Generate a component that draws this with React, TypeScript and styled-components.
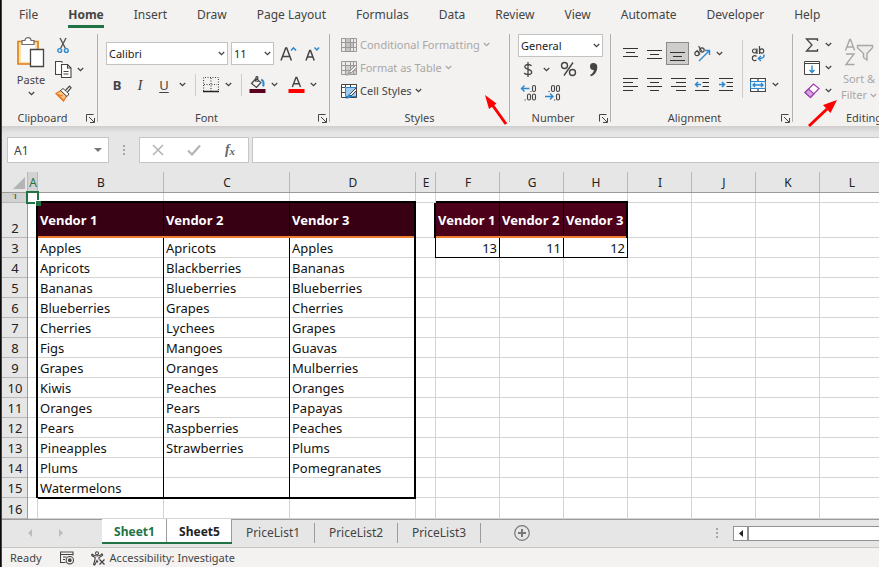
import React from "react";
import styled, { createGlobalStyle, css } from "styled-components";

const UI_FONT = `"Noto Sans", "Open Sans", sans-serif`;
const GREEN = "#217346";
const INK = "#444444";
const BLUE = "#2b88d0";
const MUTED = "#a9a7a5";

const GlobalStyle = createGlobalStyle`
  *, *::before, *::after { box-sizing: border-box; }
  body { margin: 0; background: #f3f2f1; font-family: ${UI_FONT}; color: ${INK}; }
  button, input, select { font: inherit; color: inherit; margin: 0; padding: 0; border: 0; background: none; border-radius: 0; }
  svg { display: block; flex: none; }
`;

const Window = styled.div`
  display: flex;
  flex-direction: column;
  min-height: 100vh;
  overflow: hidden;
  border-left: 1px solid #0b0b0b;
  box-shadow: inset 1px 0 0 #1d5a39;
  padding-left: 1px;
`;

/* ---------- Ribbon tabs ---------- */

const TabBar = styled.nav`
  display: flex;
  gap: 30px;
  height: 33px;
  padding-left: 17px;
  font-size: 12px;
  line-height: 16px;
  white-space: nowrap;
`;

const RibbonTab = styled.button<{ $active?: boolean }>`
  flex: none;
  height: 28px;
  padding-top: 4px;
  border-bottom: 3px solid ${(p) => (p.$active ? GREEN : "transparent")};
  font-weight: ${(p) => (p.$active ? 700 : 400)};
`;

/* ---------- Ribbon ---------- */

const Ribbon = styled.section`
  position: relative;
  display: flex;
  height: 93px;
  font-size: 11px;
  line-height: 16px;
  white-space: nowrap;
`;

const Group = styled.div<{ $width: number }>`
  flex: none;
  width: ${(p) => p.$width}px;
  display: grid;
  grid-template-rows: 77px 16px;
`;

const GroupDivider = styled.div`
  flex: none;
  width: 1px;
  height: 88px;
  margin-top: 1px;
  background: #b1b0af;
`;

const GroupBody = styled.div<{ $left?: number; $column?: boolean }>`
  display: flex;
  flex-direction: ${(p) => (p.$column ? "column" : "row")};
  align-items: flex-start;
  padding-left: ${(p) => p.$left ?? 0}px;
`;

const GroupFooter = styled.div<{ $launcher: boolean }>`
  display: grid;
  grid-template-columns: ${(p) => (p.$launcher ? "1fr 14px" : "1fr")};
  align-items: center;
  text-align: center;
  button { justify-self: end; padding-right: 2px; }
`;

const Row = styled.div<{ $top?: number; $gap?: number }>`
  display: flex;
  align-items: center;
  height: 23px;
  margin-top: ${(p) => p.$top ?? 0}px;
  gap: ${(p) => p.$gap ?? 0}px;
`;

const Tool = styled.button<{ $width?: number; $active?: boolean }>`
  display: flex;
  align-items: center;
  justify-content: center;
  flex: none;
  width: ${(p) => p.$width ?? 24}px;
  height: 23px;
  font-size: 13px;
  ${(p) => p.$active && css`&& { background: #cfcdcc; border: 1px solid #8b8a89; }`}
`;

const BigTool = styled.button<{ $width: number; $muted?: boolean }>`
  display: flex;
  flex-direction: column;
  align-items: center;
  gap: 3px;
  width: ${(p) => p.$width}px;
  && { padding-top: 4px; }
  color: ${(p) => (p.$muted ? MUTED : INK)};
`;

const StackedLabel = styled.span`
  display: grid;
  justify-items: center;
`;

const LabelWithChevron = styled.span`
  display: flex;
  align-items: center;
  gap: 3px;
`;

const ToolColumn = styled.div<{ $row: number; $left?: number }>`
  display: grid;
  grid-auto-rows: ${(p) => p.$row}px;
  align-items: center;
  margin-left: ${(p) => p.$left ?? 0}px;
`;

const StyleButton = styled.button`
  display: flex;
  align-items: center;
  gap: 3px;
  height: 23px;
  &:disabled { color: ${MUTED}; }
`;

const Separator = styled.div<{ $left: number; $right: number; $tall?: boolean }>`
  flex: none;
  width: 1px;
  height: ${(p) => (p.$tall ? 58 : 22)}px;
  margin: ${(p) => (p.$tall ? 7 : 0)}px ${(p) => p.$right}px 0 ${(p) => p.$left}px;
  background: #cfcdcc;
`;

const FontColorTools = styled.div`
  display: flex;
  margin-left: 5px;
`;

const AlignGrid = styled.div`
  display: grid;
  grid-template-columns: repeat(5, 24px);
  grid-auto-rows: 23px;
  row-gap: 8px;
  padding-top: 9px;
`;

const WrapColumn = styled.div`
  display: grid;
  grid-template-columns: 22px 12px;
  grid-auto-rows: 23px;
  row-gap: 8px;
  padding-top: 9px;
`;

const SelectBox = styled.label<{ $width: number }>`
  position: relative;
  flex: none;
  width: ${(p) => p.$width}px;
  height: 23px;
  color: #1b1b1b;
  select {
    appearance: none;
    width: 100%;
    height: 100%;
    padding: 0 14px 0 2px;
    background: #fff;
    border: 1px solid #c3c2c1;
  }
  svg { position: absolute; right: 3px; top: 9px; pointer-events: none; }
`;

const Pointers = styled.svg`
  position: absolute;
  left: 0;
  top: 0;
  pointer-events: none;
`;

/* ---------- Formula bar ---------- */

const FormulaRow = styled.div`
  display: flex;
  height: 46px;
  padding: 11px 0 9px 5px;
  background: linear-gradient(#cfcecd, #e6e6e6 7px);
  font-size: 12px;
`;

const NameBox = styled.div`
  display: flex;
  flex: none;
  width: 102px;
  background: #fff;
  border: 1px solid #c6c6c6;
  input { flex: 1; min-width: 0; padding-left: 6px; outline: 0; }
  button { width: 20px; display: grid; place-items: center; }
`;

const Grip = styled.div<{ $width: number }>`
  flex: none;
  width: ${(p) => p.$width}px;
  display: grid;
  place-items: center;
`;

const EntryButtons = styled.div`
  display: grid;
  grid-template-columns: repeat(3, 1fr);
  flex: none;
  width: 110px;
  background: #fff;
  border: 1px solid #c6c6c6;
  button { display: grid; place-items: center; }
`;

const FunctionMark = styled.span`
  font-family: "Liberation Serif", serif;
  font-style: italic;
  font-weight: 700;
  font-size: 14px;
  line-height: 16px;
  color: #666;
  sub { font-size: 11px; line-height: 1; vertical-align: -1px; }
`;

const FormulaInput = styled.input`
  && {
    flex: 1;
    min-width: 0;
    margin-left: 3px;
    padding: 0 6px;
    background: #fff;
    border: 1px solid #c6c6c6;
    border-right: 0;
  }
`;

/* ---------- Grid ---------- */

const SheetArea = styled.main`
  overflow: hidden;
  background: #fff;
`;

const Sheet = styled.table`
  table-layout: fixed;
  width: 100%;
  min-width: 882px;
  border-collapse: separate;
  border-spacing: 0;
  color: #111;
  font-size: 13px;
  line-height: 19px;
  th, td { padding: 0; overflow: hidden; white-space: nowrap; }
`;

const Col = styled.col<{ $width?: number }>`
  width: ${(p) => (p.$width ? `${p.$width}px` : "auto")};
`;

const SheetRow = styled.tr<{ $height: number }>`
  height: ${(p) => p.$height}px;
`;

const ColumnHead = styled.th<{ $active?: boolean }>`
  font-size: 12px;
  font-weight: 400;
  background: ${(p) => (p.$active ? "#d2d2d2" : "#e6e6e6")};
  color: ${(p) => (p.$active ? GREEN : "#222")};
  box-shadow: inset 0 -1px 0 #9b9b9b, inset -1px 0 0 #b9b9b9;
`;

const Corner = styled.td`
  background: #e6e6e6;
  box-shadow: inset 0 -1px 0 #9b9b9b, inset -1px 0 0 #b9b9b9;
  svg { margin: 0 3px 0 auto; }
`;

const RowHead = styled.th<{ $active?: boolean }>`
  font-weight: 400;
  vertical-align: bottom;
  background: ${(p) => (p.$active ? "#d2d2d2" : "#e6e6e6")};
  color: ${(p) => (p.$active ? GREEN : "#222")};
  box-shadow: inset -1px 0 0 #9b9b9b, inset 0 -1px 0 #b9b9b9;
`;

const ClippedNumber = styled.span`
  display: block;
  height: 5px;
  margin-bottom: 4px;
  overflow: hidden;
  line-height: 5px;
`;

const Cell = styled.td<{ $edges: string; $fill?: string; $number?: boolean }>`
  background: ${(p) => p.$fill ?? "#fff"};
  box-shadow: ${(p) => p.$edges};
  text-align: ${(p) => (p.$number ? "right" : "left")};
  && { padding: 0 ${(p) => (p.$number ? 3 : 2)}px 0 2px; }
  ${(p) => p.$fill && css`color: #fff; font-weight: 700;`}
`;

const SelectedCell = styled.td`
  position: relative;
  && { overflow: visible; }
  &::before {
    content: "";
    position: absolute;
    z-index: 1;
    inset: -2px -1px -1px -2px;
    border: 2px solid ${GREEN};
  }
  &::after {
    content: "";
    position: absolute;
    z-index: 2;
    right: -3px;
    bottom: -3px;
    width: 6px;
    height: 6px;
    background: ${GREEN};
    border: 1px solid #fff;
    border-width: 1px 0 0 1px;
  }
`;

/* ---------- Sheet tabs and status ---------- */

const SheetBar = styled.div`
  display: flex;
  height: 29px;
  background: #e6e6e6;
  border-bottom: 1px solid #c6c6c6;
  box-shadow: inset 0 1px 0 #9b9b9b;
  font-size: 12px;
  line-height: 16px;
`;

const SheetNav = styled.div`
  display: flex;
  flex: none;
  width: 100px;
  padding: 0 28px 0 15px;
  button { flex: 1; display: grid; place-items: center; }
`;

const SheetTab = styled.button<{ $selected?: boolean; $current?: boolean }>`
  flex: none;
  align-self: flex-start;
  width: ${(p) => (p.$selected ? 65 : 83)}px;
  white-space: nowrap;
  ${(p) =>
    p.$selected
      ? css`
          && {
            height: 25px;
            padding-top: 3px;
            background: #fff;
            border-bottom: 2px solid ${GREEN};
            box-shadow: inset -1px 0 0 #9b9b9b;
            font-weight: 700;
            color: ${p.$current ? GREEN : "#222"};
          }
        `
      : css`
          && {
            margin-top: 4px;
            height: 20px;
            border-right: 1px solid #9b9b9b;
          }
        `}
`;

const AddSheet = styled.button`
  flex: none;
  display: grid;
  place-items: center;
  width: 82px;
`;

const Spacer = styled.div`
  flex: 1;
`;

const Scroller = styled.div`
  display: flex;
  flex: none;
  width: 146px;
  height: 15px;
  margin-top: 7px;
  background: #fff;
  border: 1px solid #919191;
  border-right: 0;
  button { width: 15px; display: grid; place-items: center; border-right: 2px solid #919191; }
`;

const StatusBar = styled.footer`
  display: flex;
  align-items: center;
  height: 20px;
  padding: 0 8px;
  font-size: 11px;
  line-height: 16px;
  white-space: nowrap;
`;

const StatusItem = styled.button<{ $left: number }>`
  display: flex;
  align-items: center;
  gap: 4px;
  && { margin-left: ${(p) => p.$left}px; }
`;

/* ---------- Icons ---------- */

const Chevron = ({ color = INK }: { color?: string }) => (
  <svg width="7" height="5" viewBox="0 0 7 5" fill="none" stroke={color} strokeWidth="1.3"><path d="M.8 1 3.5 3.6 6.2 1" /></svg>
);

const Launcher = () => (
  <svg width="9" height="9" viewBox="0 0 9 9" fill="none" stroke={INK}><path d="M.5 7.5v-7h7M3 3l5 5M8.5 4v4.5H4" /></svg>
);

const PasteIcon = () => (
  <svg width="28" height="32" viewBox="0 0 28 32" fill="none">
    <path d="M1 4.5h20V27H1z" fill="#fbe3b0" stroke="#e07b12" strokeWidth="1.6" />
    <path d="M4 7h14v18H4z" fill="#fbfbfb" />
    <path d="M5 3.5h3C8 1.5 9.3.7 11 .7s3 .8 3 2.8h3v4H5z" fill="#fff" stroke="#6d6d6d" strokeWidth="1.2" />
    <path d="M13.5 12.5h13v17h-13z" fill="#fff" stroke="#444" strokeWidth="1.3" />
  </svg>
);

const CutIcon = () => (
  <svg width="16" height="17" viewBox="0 0 16 17" fill="none">
    <path d="M5 1l5.5 10.5M11 1 5.500 11.500" stroke="#555" strokeWidth="1.4" />
    <circle cx="4.7" cy="13.5" r="1.9" stroke={BLUE} strokeWidth="1.4" />
    <circle cx="11.3" cy="13.5" r="1.9" stroke={BLUE} strokeWidth="1.4" />
  </svg>
);

const CopyIcon = () => (
  <svg width="17" height="17" viewBox="0 0 17 17" fill="#fff" stroke="#444" strokeWidth="1.1">
    <path d="M6.500 13.500h-6V.5h6l1 1" />
    <path d="M6.500 3.500h6l3.500 3.500v9.500H6.500z" /><path d="M12.500 3.500V7H16M8.500 10.500h5M8.500 13h5" fill="none" />
  </svg>
);

const BrushIcon = () => (
  <svg width="17" height="17" viewBox="0 0 17 17">
    <path d="M1 8.500 6 5.500l5.500 5.500-3 5L4.500 12z" fill="#f9c78a" stroke="#e8741a" strokeWidth="1.2" />
    <path d="M3 9.500 8.500 15M3 9.500l5 1.500" stroke="#e8741a" fill="none" />
    <path d="M5.500 5.500 8 3.500l6 5.500-2 2.500z" fill="#fff" stroke="#444" />
    <path d="M10.500 5.500 14.500 1.200 16 2.800 12.500 7" fill="#fff" stroke="#444" strokeWidth="1.2" />
  </svg>
);

const FontSizeIcon = ({ grow }: { grow?: boolean }) => (
  <svg width="18" height="17" viewBox="0 0 18 17" fill="none">
    {grow ? (
      <>
        <path d="M1 15.500 5.700 3h1L11.400 15.500M2.800 11.500h6.800" stroke={INK} strokeWidth="1.5" />
        <path d="M11 5.500 13.500 2.800 16 5.500" stroke={BLUE} strokeWidth="1.5" />
      </>
    ) : (
      <>
        <path d="M2 15.500 5.700 5.500h.8l3.700 10M3.400 12h5.400" stroke={INK} strokeWidth="1.5" />
        <path d="M10.500 2.500 12.800 5l2.300-2.500" stroke={BLUE} strokeWidth="1.5" />
      </>
    )}
  </svg>
);

const BordersIcon = () => (
  <svg width="16" height="16" viewBox="0 0 16 16" stroke={INK} fill="none">
    <path d="M.5 14V.5h15V14M8 1v13M1 7.500h14" strokeDasharray="1 1.5" strokeWidth="1.2" />
    <path d="M0 14.500h16" stroke="#222" strokeWidth="1.5" />
  </svg>
);

const FillIcon = () => (
  <svg width="17" height="17" viewBox="0 0 17 17" fill="none">
    <path d="M7 2.500 2.500 7.500 7.500 11.500 12 6.500zM7 6V1.300c0-.8 1.800-.8 1.800 0V6" stroke={INK} strokeWidth="1.2" />
    <path d="M12 4c2.500 0 3 2.500 2.200 6.500" stroke={BLUE} strokeWidth="2" />
    <path d="M.5 13h16v4H.5z" fill="#5a0020" />
  </svg>
);

const FontColorIcon = () => (
  <svg width="17" height="17" viewBox="0 0 17 17" fill="none">
    <path d="M4.300 11 8 1.500h.8L12.500 11M5.600 7.800h5.600" stroke={INK} strokeWidth="1.4" />
    <path d="M.5 13h16v4H.5z" fill="#ff0000" />
  </svg>
);

const StyleGridIcon = ({ kind }: { kind: "conditional" | "table" | "cell" }) => {
  const on = kind === "cell";
  const line = on ? INK : "#9a9896";
  return (
    <svg width="16" height="16" viewBox="0 0 16 16" fill="none">
      <path d="M.5 1.500h15v13H.5z" fill={on ? "#fff" : "#ecebea"} stroke={line} />
      {kind === "conditional" && <path d="M5 1.500h4v4H5zM5 6h7v4H5zM5 10.500h4v3.500H5z" fill="#c4c2c0" />}
      {kind === "table" && <path d="M5 5.500h10v8.500H5z" fill="#d0cecc" />}
      {on && <path d="M4.500 4.500h11v9h-11z" fill="#9fcbf0" stroke={BLUE} />}
      <path d={on ? "M4.500 1v3M1 4.500h3M1 9.500h3M9.500 1v3M15.500 1.500v13" : "M4.500 1v13.500M9.500 1v13.500M1 5.500h14.500M1 10.500h14.500M12.500 1v13"} stroke={line} />
      {kind !== "conditional" && (
        <>
          <path d="M15.500 4.500 8.500 11.500l1.500 1.500 5.500-5.500z" fill="#f3f2f1" stroke={line} />
          <path d="M8.500 11c-2 .5-1.500 3-4 4.300 2.500.7 5.500 0 5.700-2.500z" fill={on ? BLUE : "#aaa8a6"} />
        </>
      )}
    </svg>
  );
};

const DollarIcon = () => (
  <svg width="12" height="17" viewBox="0 0 12 17" fill="none" stroke={INK} strokeWidth="1.3">
    <path d="M9.500 4.800C8.500 3.700 7 3.500 6 3.500c-2 0-3.200 1-3.200 2.300C2.800 9 9.700 7.600 9.700 11c0 1.500-1.400 2.500-3.700 2.500-1.500 0-3-.4-3.900-1.500M6 1v15" />
  </svg>
);

const PercentIcon = () => (
  <svg width="17" height="17" viewBox="0 0 17 17" fill="none" stroke={INK} strokeWidth="1.4">
    <circle cx="4.500" cy="4.500" r="3" /><circle cx="12.500" cy="11.500" r="3" /><path d="M13 1.500 4 14.500" />
  </svg>
);

const CommaIcon = () => (
  <svg width="11" height="16" viewBox="0 0 9 14"><path d="M4.300.8a3.300 3.300 0 0 1 3.500 3.500c0 4-2.300 7-5.500 8.200L1.500 11.300C3.500 10.200 4.700 8.800 4.800 7A3.100 3.100 0 1 1 4.300.8z" fill={INK} /></svg>
);

const DecimalIcon = ({ increase }: { increase?: boolean }) => (
  <svg width="18" height="18" viewBox="0 0 18 18" fill="none" stroke={INK} strokeWidth="1.1">
    {increase ? (
      <>
        <path d="M9.500 4.500H1.500M4.500 1.500l-3 3 3 3" stroke={BLUE} strokeWidth="1.4" />
        <rect x="12.500" y="1.500" width="3" height="6" rx="1.5" /><path d="M10.500 7.500h1M4.500 16h1.200" />
        <rect x="7.500" y="10" width="3" height="6" rx="1.5" /><rect x="12.500" y="10" width="3" height="6" rx="1.5" />
      </>
    ) : (
      <>
        <rect x="7.500" y="1.500" width="3" height="6" rx="1.5" /><rect x="12.500" y="1.500" width="3" height="6" rx="1.5" />
        <path d="M4.500 7.500h1.200M10 16h1.200" /><rect x="12.500" y="10" width="3" height="6" rx="1.5" />
        <path d="M1 12.500h8M6 9.500l3 3-3 3" stroke={BLUE} strokeWidth="1.4" />
      </>
    )}
  </svg>
);

const LinesIcon = ({ d }: { d: string }) => (
  <svg width="15" height="15" viewBox="0 0 15 15" fill="none" stroke="#333" strokeWidth="1"><path d={d} /></svg>
);

const IndentIcon = ({ out }: { out?: boolean }) => (
  <svg width="16" height="15" viewBox="0 0 16 15" fill="none">
    <path d="M1 1.500h14M8.500 5.500h6.500M8.500 9.500h6.500M1 13.500h14" stroke="#333" />
    <path d={out ? "M7 7.500H1.500M4 5 1.500 7.500 4 10" : "M1 7.500h5.500M4 5l2.500 2.500L4 10"} stroke={BLUE} strokeWidth="1.5" />
  </svg>
);

const OrientationIcon = () => (
  <svg width="18" height="18" viewBox="0 0 18 18" fill="none" stroke={INK} strokeWidth="1.2">
    <circle cx="4" cy="8.500" r="2.200" /><path d="M3.800 5 7 9.500" /><circle cx="9" cy="5" r="2.200" /><path d="M5.500 1 9 6.500" />
    <path d="M6 16 16 6M12 5.500h4.500V10" stroke={BLUE} strokeWidth="1.4" />
  </svg>
);

const WrapIcon = () => (
  <svg width="16" height="18" viewBox="0 0 16 18" fill="none" stroke={INK} strokeWidth="1.2">
    <circle cx="4.500" cy="6" r="2" /><path d="M7 3.500V9M9.500 1v8" /><circle cx="11.700" cy="6" r="2.100" />
    <path d="M6.500 11.500c-1.500-1.500-4.200-.7-4.200 1.700s2.700 3.200 4.200 1.700" />
    <path d="M13.800 9.500c.8 2.500-.8 4-5.300 4M11 11l-2.700 2.500L11 16" stroke={BLUE} strokeWidth="1.4" />
  </svg>
);

const MergeIcon = () => (
  <svg width="16" height="16" viewBox="0 0 16 16" fill="none">
    <path d="M.5 1.500h15v13H.5zM8 1v3.500M8 11.500V15" fill="#fff" stroke={INK} strokeWidth="1.2" />
    <path d="M.5 4.500h15v7H.5z" fill="#e8f3fc" stroke={BLUE} strokeWidth="1.2" />
    <path d="M3 8h10M5 6 3 8l2 2M11 6l2 2-2 2" stroke={BLUE} strokeWidth="1.3" />
  </svg>
);

const SumIcon = () => (
  <svg width="14" height="14" viewBox="0 0 14 14" fill="none" stroke={INK} strokeWidth="1.3"><path d="M12.500 3V1H1.500L7 7l-5.500 6h11v-2" /></svg>
);

const FillDownIcon = () => (
  <svg width="16" height="14" viewBox="0 0 16 14" fill="none">
    <path d="M.5.5h15v13H.5zM1 2.500h14" fill="#fff" stroke={INK} /><path d="M8 4.500v7M5.500 9 8 11.500 10.500 9" stroke={BLUE} strokeWidth="1.4" />
  </svg>
);

const EraserIcon = () => (
  <svg width="16" height="16" viewBox="0 0 16 16">
    <path d="M1 9.500 9.500 1 15 5.500 6.500 14.500z" fill="#fff" stroke="#9b3fb0" strokeWidth="1.2" />
    <path d="M1 9.500 4.500 6 10 10.700l-3.500 3.800z" fill="#d9a3e3" stroke="#9b3fb0" strokeWidth="1.2" />
  </svg>
);

const SortFilterIcon = () => (
  <svg width="30" height="31" viewBox="0 0 30 31" fill="none" stroke={MUTED} strokeWidth="1.4">
    <path d="M1.500 13.500 5.700 2.500h.8l4.200 11M3 10h6.300M2 17h8L2 27.500h8.500" />
    <path d="M13.500 8.500h15v2.200L23 16.500v6.500l-3.500-2.500v-4L13.500 10.700z" fill="#eeedec" />
  </svg>
);

const Dots = () => (
  <svg width="2" height="11" viewBox="0 0 2 11" fill="#a6a6a6"><path d="M0 0h2v2H0zM0 4h2v2H0zM0 8h2v2H0z" /></svg>
);

const Triangle = ({ d, color, width = 8, height = 8 }: { d: string; color: string; width?: number; height?: number }) => (
  <svg width={width} height={height} viewBox={`0 0 ${width} ${height}`} fill={color}><path d={d} /></svg>
);

const MacroIcon = () => (
  <svg width="15" height="14" viewBox="0 0 15 14" fill="none" stroke={INK} strokeWidth="1.1">
    <path d="M5.500 11.500h-5V1h12.500v3.500M.5 3.500H13M3 6h3.500M3 8.500h2" /><circle cx="9.800" cy="9.200" r="3.700" /><circle cx="9.800" cy="9.200" r="1.300" fill={INK} />
  </svg>
);

const AccessibilityIcon = () => (
  <svg width="15" height="15" viewBox="0 0 15 15" fill="none" stroke={INK} strokeWidth="1.1">
    <circle cx="6" cy="2.200" r="1.500" /><path d="M1 3c1.500 1.500 3 2 5 2s3.500-.5 5-2l.7 1.200C10.500 5.500 9 6 8 6.500v2M1 3 .5 4.200C1.500 5.500 3 6 4.200 6.500c0 3-.7 4.500-1.700 7l1.200.5L6 9.500l1 2" />
    <path d="m8.500 8.500 5 5M13.500 8.500l-5 5" strokeWidth="1.3" />
  </svg>
);

/* ---------- Data ---------- */

const ribbonTabs = ["File", "Home", "Insert", "Draw", "Page Layout", "Formulas", "Data", "Review", "View", "Automate", "Developer", "Help"];

const columns = "ABCDEFGHIJKL".split("");
const columnWidths: (number | undefined)[] = [10, 126, 126, 126, 20, 64, 64, 64, 64, 64, 64, undefined];

const vendors: Record<string, string[]> = {
  B: ["Apples", "Apricots", "Bananas", "Blueberries", "Cherries", "Figs", "Grapes", "Kiwis", "Oranges", "Pears", "Pineapples", "Plums", "Watermelons"],
  C: ["Apricots", "Blackberries", "Blueberries", "Grapes", "Lychees", "Mangoes", "Oranges", "Peaches", "Pears", "Raspberries", "Strawberries"],
  D: ["Apples", "Bananas", "Blueberries", "Cherries", "Grapes", "Guavas", "Mulberries", "Oranges", "Papayas", "Peaches", "Plums", "Pomegranates"],
};
const counts: Record<string, number> = { F: 13, G: 11, H: 12 };
const headings: Record<string, string> = { B: "Vendor 1", C: "Vendor 2", D: "Vendor 3", F: "Vendor 1", G: "Vendor 2", H: "Vendor 3" };

const inList = (c: string) => "BCD".includes(c);
const inCounts = (c: string) => "FGH".includes(c);

function cellText(col: string, row: number) {
  if (row === 2) return headings[col];
  if (row === 3 && counts[col]) return counts[col];
  return vendors[col]?.[row - 3];
}

/* Cell rules are painted as inset shadows; earlier entries lie on top. */
function cellEdges(col: string, row: number) {
  const right = (w: number, c: string) => `inset -${w}px 0 0 ${c}`;
  const bottom = (w: number, c: string) => `inset 0 -${w}px 0 ${c}`;
  const edges: string[] = [];
  const listRow = row >= 2 && row <= 15;
  if (row === 1 && (inList(col) || inCounts(col))) edges.push(bottom(2, "#000"));
  if (listRow && (col === "A" || col === "D")) edges.push(right(2, "#000"));
  if (row === 2 && (col === "E" || col === "H")) edges.push(right(2, "#000"));
  if (row === 2 && (inList(col) || inCounts(col))) edges.push(bottom(2, "#ed7d31"));
  if (listRow && (col === "B" || col === "C")) edges.push(right(1, "#000"));
  if (row === 2 && (col === "F" || col === "G")) edges.push(right(1, "#000"));
  if (row === 3 && (col === "E" || inCounts(col))) edges.push(right(1, "#000"));
  if (row === 3 && inCounts(col)) edges.push(bottom(1, "#000"));
  if (row === 15 && inList(col)) edges.push(bottom(1, "#000"));
  if (row === 16 && inList(col)) edges.push("inset 0 1px 0 #000");
  edges.push(right(1, "#d4d4d4"), bottom(1, "#d4d4d4"));
  return edges.join(", ");
}

const rowHeight = (row: number) => (row === 1 ? 10 : row === 2 ? 35 : row === 16 ? 21 : 20);

/* ---------- Parts ---------- */

const Footer = ({ label, launcher = true }: { label: string; launcher?: boolean }) => (
  <GroupFooter $launcher={launcher}>
    <span>{label}</span>
    {launcher && <button aria-label={`${label} settings`}><Launcher /></button>}
  </GroupFooter>
);

const Picker = ({ label, value, width }: { label: string; value: string; width: number }) => (
  <SelectBox $width={width}>
    <select aria-label={label} defaultValue={value}><option>{value}</option></select>
    <Chevron />
  </SelectBox>
);

const More = ({ label, width = 14 }: { label: string; width?: number }) => (
  <Tool $width={width} aria-label={label}><Chevron /></Tool>
);

const Letter = styled.span<{ $kind: "bold" | "italic" | "underline" }>`
  font-weight: ${(p) => (p.$kind === "bold" ? 700 : 400)};
  font-style: ${(p) => (p.$kind === "italic" ? "italic" : "normal")};
  font-family: ${(p) => (p.$kind === "italic" ? `"Liberation Serif", serif` : UI_FONT)};
  font-size: ${(p) => (p.$kind === "italic" ? 15 : 13)}px;
  text-decoration: ${(p) => (p.$kind === "underline" ? "underline" : "none")};
  text-underline-offset: 2px;
`;

function RibbonBody() {
  return (
    <Ribbon aria-label="Home ribbon">
      <Group $width={95}>
        <GroupBody $left={13}>
          <BigTool $width={32}>
            <PasteIcon /><span>Paste</span><Chevron />
          </BigTool>
          <ToolColumn $row={24} $left={4}>
            <Tool aria-label="Cut"><CutIcon /></Tool>
            <Row><Tool aria-label="Copy"><CopyIcon /></Tool><More label="Copy options" width={10} /></Row>
            <Tool aria-label="Format Painter"><BrushIcon /></Tool>
          </ToolColumn>
        </GroupBody>
        <Footer label="Clipboard" />
      </Group>
      <GroupDivider />
      <Group $width={231}>
        <GroupBody $left={8} $column>
          <Row $top={9} $gap={3}>
            <Picker label="Font" value="Calibri" width={122} />
            <Picker label="Font size" value="11" width={43} />
            <Row>
              <Tool aria-label="Increase font size"><FontSizeIcon grow /></Tool>
              <Tool aria-label="Decrease font size"><FontSizeIcon /></Tool>
            </Row>
          </Row>
          <Row $top={8}>
            <Tool $width={22} aria-label="Bold"><Letter $kind="bold">B</Letter></Tool>
            <Tool aria-label="Italic"><Letter $kind="italic">I</Letter></Tool>
            <Tool aria-label="Underline"><Letter $kind="underline">U</Letter></Tool>
            <More label="Underline options" width={12} />
            <Separator $left={7} $right={5} />
            <Tool $width={20} aria-label="Borders"><BordersIcon /></Tool>
            <More label="Border options" />
            <Separator $left={6} $right={5} />
            <Tool $width={20} aria-label="Fill color"><FillIcon /></Tool>
            <More label="Fill color options" />
            <FontColorTools>
              <Tool $width={20} aria-label="Font color"><FontColorIcon /></Tool>
              <More label="Font color options" />
            </FontColorTools>
          </Row>
        </GroupBody>
        <Footer label="Font" />
      </Group>
      <GroupDivider />
      <Group $width={179}>
        <GroupBody $left={11} $column>
          <StyleButton disabled><StyleGridIcon kind="conditional" />Conditional Formatting<Chevron color={MUTED} /></StyleButton>
          <StyleButton disabled><StyleGridIcon kind="table" />Format as Table<Chevron color={MUTED} /></StyleButton>
          <StyleButton><StyleGridIcon kind="cell" />Cell Styles<Chevron /></StyleButton>
        </GroupBody>
        <Footer label="Styles" launcher={false} />
      </Group>
      <GroupDivider />
      <Group $width={100}>
        <GroupBody $left={8} $column>
          <Row $top={1}><Picker label="Number format" value="General" width={85} /></Row>
          <Row $top={1}>
            <Tool $width={20} aria-label="Accounting format"><DollarIcon /></Tool>
            <More label="Currency options" width={16} />
            <Tool $width={28} aria-label="Percent style"><PercentIcon /></Tool>
            <Tool $width={22} aria-label="Comma style"><CommaIcon /></Tool>
          </Row>
          <Row $gap={2}>
            <Tool $width={22} aria-label="Increase decimal"><DecimalIcon increase /></Tool>
            <Tool $width={22} aria-label="Decrease decimal"><DecimalIcon /></Tool>
          </Row>
        </GroupBody>
        <Footer label="Number" />
      </Group>
      <GroupDivider />
      <Group $width={181}>
        <GroupBody $left={7}>
          <AlignGrid>
            <Tool aria-label="Top align"><LinesIcon d="M0 2.500h15M3 6.500h9M0 10.500h15" /></Tool>
            <Tool aria-label="Middle align"><LinesIcon d="M0 4.500h15M3 8.500h9M0 12.500h15" /></Tool>
            <Tool $width={23} $active aria-pressed aria-label="Bottom align"><LinesIcon d="M0 6.500h15M3 10.500h9M0 14.500h15" /></Tool>
            <Tool aria-label="Orientation"><OrientationIcon /></Tool>
            <More label="Orientation options" width={10} />
            <Tool aria-label="Align left"><LinesIcon d="M0 1.500h15M0 5.500h10M0 9.500h15M0 13.500h10" /></Tool>
            <Tool aria-label="Center"><LinesIcon d="M0 1.500h15M3 5.500h9M0 9.500h15M3 13.500h9" /></Tool>
            <Tool aria-label="Align right"><LinesIcon d="M0 1.500h15M5 5.500h10M0 9.500h15M5 13.500h10" /></Tool>
            <Tool aria-label="Decrease indent"><IndentIcon out /></Tool>
            <Tool aria-label="Increase indent"><IndentIcon /></Tool>
          </AlignGrid>
          <Separator $left={4} $right={4} $tall />
          <WrapColumn>
            <Tool $width={22} aria-label="Wrap text"><WrapIcon /></Tool>
            <span />
            <Tool $width={22} aria-label="Merge and center"><MergeIcon /></Tool>
            <More label="Merge options" width={12} />
          </WrapColumn>
        </GroupBody>
        <Footer label="Alignment" />
      </Group>
      <GroupDivider />
      <Group $width={142}>
        <GroupBody $left={8}>
          <ToolColumn $row={23}>
            <Row><Tool $width={22} aria-label="AutoSum"><SumIcon /></Tool><More label="AutoSum options" width={10} /></Row>
            <Row><Tool $width={22} aria-label="Fill"><FillDownIcon /></Tool><More label="Fill options" width={10} /></Row>
            <Row><Tool $width={22} aria-label="Clear"><EraserIcon /></Tool><More label="Clear options" width={10} /></Row>
          </ToolColumn>
          <BigTool $width={52} $muted>
            <SortFilterIcon />
            <StackedLabel>
              <span>Sort &amp;</span>
              <LabelWithChevron>Filter<Chevron color={MUTED} /></LabelWithChevron>
            </StackedLabel>
          </BigTool>
        </GroupBody>
        <Footer label="Editing" launcher={false} />
      </Group>
      <Pointers width="877" height="96" viewBox="2 33 877 96" stroke="#ff0000" fill="#ff0000">
        <path d="M506 124 491 103M809 126l18-17" strokeWidth="3" />
        <path d="M485 95l11.500 8.500-7.500 5.500zM837 100l-6.500 13-7.500-8z" stroke="none" />
      </Pointers>
    </Ribbon>
  );
}

function Spreadsheet() {
  const rows = Array.from({ length: 16 }, (_, i) => i + 1);
  return (
    <SheetArea>
      <Sheet>
        <colgroup>
          <Col $width={26} />
          {columns.map((c, i) => <Col key={c} $width={columnWidths[i]} />)}
        </colgroup>
        <thead>
          <SheetRow $height={21}>
            <Corner><Triangle d="M12 0v12H0z" color="#b4b4b4" width={12} height={12} /></Corner>
            {columns.map((c) => <ColumnHead key={c} scope="col" $active={c === "A"}>{c}</ColumnHead>)}
          </SheetRow>
        </thead>
        <tbody>
          {rows.map((row) => (
            <SheetRow key={row} $height={rowHeight(row)}>
              <RowHead scope="row" $active={row === 1}>
                {row === 1 ? <ClippedNumber>1</ClippedNumber> : row}
              </RowHead>
              {columns.map((c) =>
                row === 1 && c === "A" ? (
                  <SelectedCell key={c} aria-selected />
                ) : (
                  <Cell
                    key={c}
                    $edges={cellEdges(c, row)}
                    $fill={row !== 2 ? undefined : inList(c) ? "#380013" : inCounts(c) ? "#4c0019" : undefined}
                    $number={row === 3 && inCounts(c)}
                  >
                    {cellText(c, row)}
                  </Cell>
                )
              )}
            </SheetRow>
          ))}
        </tbody>
      </Sheet>
    </SheetArea>
  );
}

export default function App() {
  return (
    <>
      <GlobalStyle />
      <Window>
        <TabBar aria-label="Ribbon tabs">
          {ribbonTabs.map((t) => <RibbonTab key={t} $active={t === "Home"}>{t}</RibbonTab>)}
        </TabBar>
        <RibbonBody />
        <FormulaRow>
          <NameBox>
            <input aria-label="Name box" defaultValue="A1" />
            <button aria-label="Names"><Triangle d="M0 0h8L4 4z" color="#777" height={4} /></button>
          </NameBox>
          <Grip $width={30}><Dots /></Grip>
          <EntryButtons>
            <button aria-label="Cancel"><svg width="12" height="12" viewBox="0 0 12 12" stroke="#b5b5b5" strokeWidth="1.6"><path d="m1 1 10 10M11 1 1 11" /></svg></button>
            <button aria-label="Enter"><svg width="14" height="12" viewBox="0 0 14 12" fill="none" stroke="#b5b5b5" strokeWidth="2.2"><path d="m1 6.500 4 4L13 1.500" /></svg></button>
            <button aria-label="Insert function"><FunctionMark>f<sub>x</sub></FunctionMark></button>
          </EntryButtons>
          <FormulaInput aria-label="Formula" />
        </FormulaRow>
        <Spreadsheet />
        <SheetBar>
          <SheetNav>
            <button aria-label="Previous sheet"><Triangle d="M5 0v8L1 4z" color="#bdbdbd" /></button>
            <button aria-label="Next sheet"><Triangle d="M3 0v8l4-4z" color="#bdbdbd" /></button>
          </SheetNav>
          <SheetTab $selected $current>Sheet1</SheetTab>
          <SheetTab $selected>Sheet5</SheetTab>
          <SheetTab>PriceList1</SheetTab>
          <SheetTab>PriceList2</SheetTab>
          <SheetTab>PriceList3</SheetTab>
          <AddSheet aria-label="New sheet">
            <svg width="16" height="16" viewBox="0 0 16 16" fill="none" stroke="#777"><circle cx="8" cy="8" r="7.3" strokeWidth="1.2" /><path d="M8 4v8M4 8h8" strokeWidth="2" /></svg>
          </AddSheet>
          <Spacer />
          <Grip $width={32}><Dots /></Grip>
          <Scroller><button aria-label="Scroll left"><Triangle d="M5 0v7L1 3.500z" color="#222" width={6} height={7} /></button></Scroller>
        </SheetBar>
        <StatusBar>
          <span>Ready</span>
          <StatusItem $left={18} aria-label="Record macro"><MacroIcon /></StatusItem>
          <StatusItem $left={16}><AccessibilityIcon />Accessibility: Investigate</StatusItem>
        </StatusBar>
      </Window>
    </>
  );
}
